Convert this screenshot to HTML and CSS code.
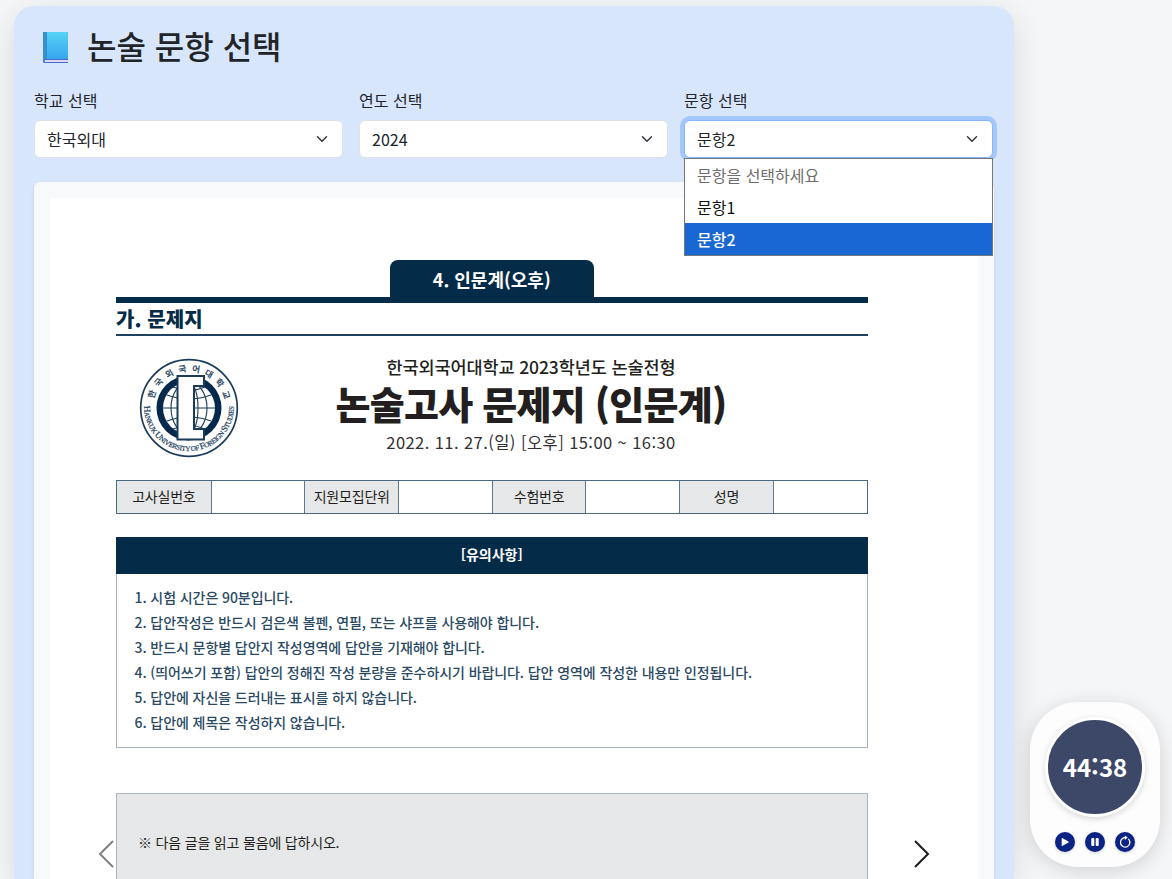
FILE: index.html
```html
<!DOCTYPE html>
<html lang="ko">
<head>
<meta charset="utf-8">
<title>논술 문항 선택</title>
<link rel="stylesheet" href="styles.css">
</head>
<body>
<main class="panel">
  <h1 class="title">
    <svg class="book" width="27" height="33" viewBox="0 0 27 33">
      <defs><linearGradient id="cover" x1="0" y1="0" x2="0" y2="1"><stop offset="0" stop-color="#55d3f4"/><stop offset="1" stop-color="#37a5ef"/></linearGradient></defs>
      <path d="M2 1H26V32H2Q1 32 1 30V2Q1 1 2 1Z" fill="#3e6fd0"/>
      <path d="M3 29H26V31H3Q2 30 3 29Z" fill="#e5d6f5"/>
      <path d="M4 1H25Q26 1 26 2V28H4Z" fill="url(#cover)"/>
      <path d="M2 1H5V28H3Q1 28 1 30V2Q1 1 2 1Z" fill="#3690cd"/>
    </svg>
    <span>논술 문항 선택</span>
  </h1>
  <div class="filters">
    <div class="field"><label>학교 선택</label>
      <div class="select"><span>한국외대</span><svg class="chev" viewBox="0 0 16 16"><path d="m2 5 6 6 6-6"/></svg></div></div>
    <div class="field"><label>연도 선택</label>
      <div class="select"><span>2024</span><svg class="chev" viewBox="0 0 16 16"><path d="m2 5 6 6 6-6"/></svg></div></div>
    <div class="field"><label>문항 선택</label>
      <div class="select focus"><span>문항2</span><svg class="chev" viewBox="0 0 16 16"><path d="m2 5 6 6 6-6"/></svg></div>
      <ul class="menu"><li class="muted">문항을 선택하세요</li><li>문항1</li><li class="on">문항2</li></ul></div>
  </div>
  <section class="viewer">
    <article class="paper">
      <div class="tab"><span class="t-tab">4. 인문계(오후)</span></div>
      <div class="section-name"><span class="t-sec">가. 문제지</span></div>
      <header class="exam-head">
        <svg class="seal" width="100" height="100" viewBox="0 0 100 100">
          <defs>
            <path id="arcTop" d="M13.500 50A36.500 36.500 0 0 1 86.500 50"/>
            <path id="arcBottom" d="M5 48A45 45 0 0 0 95 48"/>
          </defs>
          <circle cx="50" cy="50" r="48.300" fill="#fdfefd" stroke="#1b3c59" stroke-width="1.700"/>
          <circle cx="50" cy="50" r="32.500" fill="#04294a"/>
          <circle cx="50" cy="50" r="26" fill="#fdfefd"/>
          <g fill="none" stroke="#1b3c59" stroke-width="1.100">
            <ellipse cx="50" cy="50" rx="18" ry="26"/><ellipse cx="50" cy="50" rx="9" ry="26"/>
            <path d="M24 50H76M28 37Q50 45 72 37M28 63Q50 55 72 63M34 29Q50 36 66 29M34 71Q50 64 66 71"/>
          </g>
          <path d="M38.500 18H65V28H55V71H65V81.500H38.500Z" fill="#fdfefd" stroke="#1b3c59" stroke-width="2"/>
          <text class="seal-ko"><textPath href="#arcTop" startOffset="9" textLength="97">한국외국어대학교</textPath></text>
          <text class="seal-en"><textPath href="#arcBottom" startOffset="0" textLength="141"><tspan class="cap">H</tspan>ANKUK <tspan class="cap">U</tspan>NIVERSITY OF <tspan class="cap">F</tspan>OREIGN <tspan class="cap">S</tspan>TUDIES</textPath></text>
        </svg>
        <div class="exam-title">
          <div class="t-sub">한국외국어대학교 2023학년도 논술전형</div>
          <h2 class="t-main">논술고사 문제지 (인문계)</h2>
          <div class="t-date">2022. 11. 27.(일) [오후] 15:00 ~ 16:30</div>
        </div>
      </header>
      <div class="idgrid">
        <div class="key">고사실번호</div><div></div><div class="key">지원모집단위</div><div></div><div class="key">수험번호</div><div></div><div class="key">성명</div><div></div>
      </div>
      <section class="notice">
        <h3>[유의사항]</h3>
        <div class="rules">
          <p><span>1. 시험 시간은 90분입니다.</span></p>
          <p><span>2. 답안작성은 반드시 검은색 볼펜, 연필, 또는 샤프를 사용해야 합니다.</span></p>
          <p><span>3. 반드시 문항별 답안지 작성영역에 답안을 기재해야 합니다.</span></p>
          <p><span>4. (띄어쓰기 포함) 답안의 정해진 작성 분량을 준수하시기 바랍니다. 답안 영역에 작성한 내용만 인정됩니다.</span></p>
          <p><span>5. 답안에 자신을 드러내는 표시를 하지 않습니다.</span></p>
          <p><span>6. 답안에 제목은 작성하지 않습니다.</span></p>
        </div>
      </section>
      <section class="passage"><span>※ 다음 글을 읽고 물음에 답하시오.</span></section>
    </article>
    <svg class="nav prev" viewBox="0 0 16 28"><path d="M15 1 2 14 15 27"/></svg>
    <svg class="nav next" viewBox="0 0 16 28"><path d="M1 1 14 14 1 27"/></svg>
  </section>
</main>
<aside class="timer">
  <div class="clock">44<span class="colon">:</span>38</div>
  <div class="controls">
    <div class="btn"><svg viewBox="0 0 20 20"><path d="M6.700 6.200V13.800Q6.700 14.300 7.200 14L13.500 10.500Q14 10 13.500 9.600L7.200 6Q6.700 5.700 6.700 6.200Z" fill="#fff"/></svg></div>
    <div class="btn"><svg viewBox="0 0 20 20"><rect x="6.300" y="6" width="3" height="8" rx=".9" fill="#fff"/><rect x="10.700" y="6" width="3" height="8" rx=".9" fill="#fff"/></svg></div>
    <div class="btn"><svg viewBox="0 0 20 20"><path d="M13.500 7.100A4.700 4.700 0 1 1 10 5.700" fill="none" stroke="#fff" stroke-width="1.300" stroke-linecap="round"/><path d="M9.800 3.600 12.800 5.500 9.800 8Z" fill="#fff"/></svg></div>
  </div>
</aside>
</body>
</html>
```
FILE: styles.css
```css
* { box-sizing: border-box; }
html { height: 100%; overflow: hidden; }
body {
  margin: 0; height: 100%; overflow: hidden; padding: 6px 14px 0;
  background: #f5f6f8; color: #212529;
  font: 16px/24px "Noto Sans CJK KR", sans-serif;
}
h1, h2, h3, p, ul { margin: 0; padding: 0; font-weight: inherit; }
.panel {
  width: 1000px; height: 873px; padding: 20px 20px 0; overflow: hidden;
  background: #d8e6fc; border-radius: 20px 20px 0 0;
  box-shadow: 0 8px 32px rgba(0, 0, 0, .12);
}
.title { display: flex; align-items: center; height: 38px; padding: 0 0 0 8px; gap: 18px; font-size: 32px; font-weight: 500; line-height: 38px; }
.book { margin-top: 4px; }
.filters { display: grid; grid-template-columns: repeat(3, 1fr); gap: 16px; margin-top: 23px; width: 959px; }
.field { position: relative; }
.field label { display: block; height: 33px; line-height: 26px; }
.select {
  display: flex; align-items: center; justify-content: space-between;
  height: 38px; padding: 0 12px; background: #fff;
  border: 1px solid #dee2e6; border-radius: 6px;
}
.focus { border-color: #86b7fe; box-shadow: 0 0 0 4px rgba(13, 110, 253, .25); }
.chev { width: 16px; height: 12px; }
.chev path { fill: none; stroke: #343a40; stroke-width: 2; stroke-linecap: round; stroke-linejoin: round; }
.menu {
  position: absolute; top: 71px; left: 0; right: 0; z-index: 5; list-style: none;
  background: #fff; border: 1px solid #767676; height: 98px;
}
.menu li { height: 32px; line-height: 33px; padding-left: 12px; color: #101010; }
.menu .muted { color: #6d6d6d; }
.menu .on { background: #1967d2; color: #fff; font-weight: 500; }
.viewer {
  position: relative; height: 697px; margin-top: 24px; padding: 16px 16px 0;
  background: #f8f9fa; border-radius: 6px 6px 0 0; box-shadow: 0 2px 4px rgba(0, 0, 0, .08);
}
.paper { height: 681px; overflow: hidden; padding: 62px 110.500px 0 66px; background: #fff; color: #231f20; }
.paper span, .t-sub, .t-main, .t-date { white-space: nowrap; }
.tab {
  width: 204px; height: 37px; margin: 0 auto; border-radius: 8px 8px 0 0;
  background: #042b48; color: #fff; text-align: center; font-size: 18px; line-height: 39px; font-weight: 700;
}
.section-name { height: 39px; border-top: 6px solid #042b48; border-bottom: 2px solid #1f4260; color: #042b48; font-size: 20px; line-height: 32px; font-weight: 900; letter-spacing: .1px; }
.exam-head { display: flex; height: 144px; padding: 22px 0 0 23px; }
.seal { flex: none; }
.seal text { fill: #1b3c59; stroke: #1b3c59; stroke-width: .2; }
.seal-ko { font: 500 8.500px "Noto Sans CJK KR", sans-serif; }
.seal-en { font: 7px "Liberation Serif", serif; }
.seal-en .cap { font-size: 9px; }
.exam-title { width: 400px; margin-left: 92px; text-align: center; }
.t-sub { height: 20px; line-height: 17px; font-size: 17.500px; font-weight: 500; letter-spacing: -.1px; }
.t-main { height: 56px; line-height: 50px; font-size: 38px; font-weight: 900; letter-spacing: -.75px; }
.t-date { height: 24px; line-height: 16px; font-size: 16.500px; letter-spacing: .43px; color: #333031; }
.idgrid { display: grid; grid-template-columns: repeat(8, 1fr); height: 34px; border: 1px solid #4b687e; }
.idgrid div { border-left: 1px solid #5f788a; text-align: center; font-size: 14px; line-height: 30px; letter-spacing: -.2px; }
.idgrid div:first-child { border-left: 0; }
.idgrid .key { background: #e6e7e8; }
.notice { height: 211px; margin-top: 23px; border: 1px solid #a4b2bc; border-top: 0; }
.notice h3 { height: 37px; margin: 0 -1px; background: #042b48; color: #fff; text-align: center; font-size: 14px; line-height: 35px; font-weight: 700; }
.rules { padding: 11px 0 0 17.500px; color: #2a4963; font-size: 14px; line-height: 24.500px; font-weight: 500; letter-spacing: -.08px; }
.rules p { height: 25px; }
.passage { height: 140px; margin-top: 45px; padding: 36px 21px; background: #e6e7e8; border: 1px solid #a9b6bd; font-size: 14px; letter-spacing: -.18px; }
.nav { position: absolute; top: 658px; width: 16px; height: 28px; fill: none; stroke-width: 2; }
.prev { left: 64px; stroke: #808080; }
.next { left: 880px; stroke: #1c1c1c; }
.timer {
  position: absolute; left: 1030px; top: 702px; width: 130px; height: 165px; padding: 15px;
  display: flex; flex-direction: column; align-items: center;
  background: #fdfdfd; border-radius: 48px; box-shadow: 0 4px 20px rgba(0, 0, 0, .15);
}
.clock {
  width: 100px; height: 100px; border: 3px solid #fff; border-radius: 50%;
  background: #3d4768; color: #fff; font-size: 24px; font-weight: 700; line-height: 94px; text-align: center;
  box-shadow: 0 2px 6px rgba(0, 0, 0, .15);
}
.colon { position: relative; top: -1px; }
.controls { display: flex; gap: 10px; margin-top: 15px; }
.btn { width: 20px; height: 20px; border-radius: 50%; background: #0a2385; box-shadow: 0 1px 3px rgba(0, 0, 0, .2); }
.btn svg { display: block; }
```
